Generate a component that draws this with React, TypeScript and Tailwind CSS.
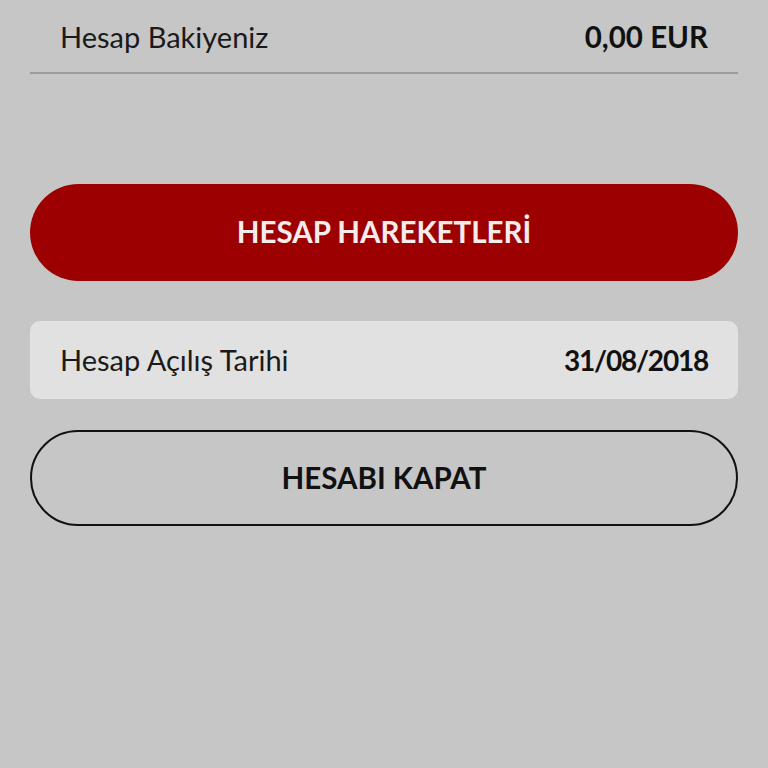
import React from 'react';

const font = { fontFamily: 'Lato, "Open Sans", sans-serif' };

export default function App() {
  return (
    <div className="min-h-[768px] w-full bg-[#c6c6c6] px-[30px]" style={font}>
      <div className="flex h-[74px] items-center justify-between border-b-2 border-[#9c9c9c] px-[30px] pt-[2px]">
        <span className="text-[29px] text-[#1a1a1a]">Hesap Bakiyeniz</span>
        <span className="text-[29.5px] font-bold text-[#111]">0,00 EUR</span>
      </div>

      <button className="mt-[110px] flex h-[97px] w-full items-center justify-center rounded-full bg-[#9d0000] text-[29.5px] font-bold text-[#f6ecec]">
        HESAP HAREKETLERİ
      </button>

      <div className="mt-[40px] flex h-[78px] items-center justify-between rounded-[10px] bg-[#e1e1e1] px-[30px]">
        <span className="text-[29px] text-[#1a1a1a]">Hesap Açılış Tarihi</span>
        <span className="text-[28px] font-bold tracking-[-1.2px] text-[#111]">31/08/2018</span>
      </div>

      <button className="mt-[31px] flex h-[96px] w-full items-center justify-center rounded-full border-2 border-[#111] text-[29.5px] font-bold text-[#111]">
        HESABI KAPAT
      </button>
    </div>
  );
}
